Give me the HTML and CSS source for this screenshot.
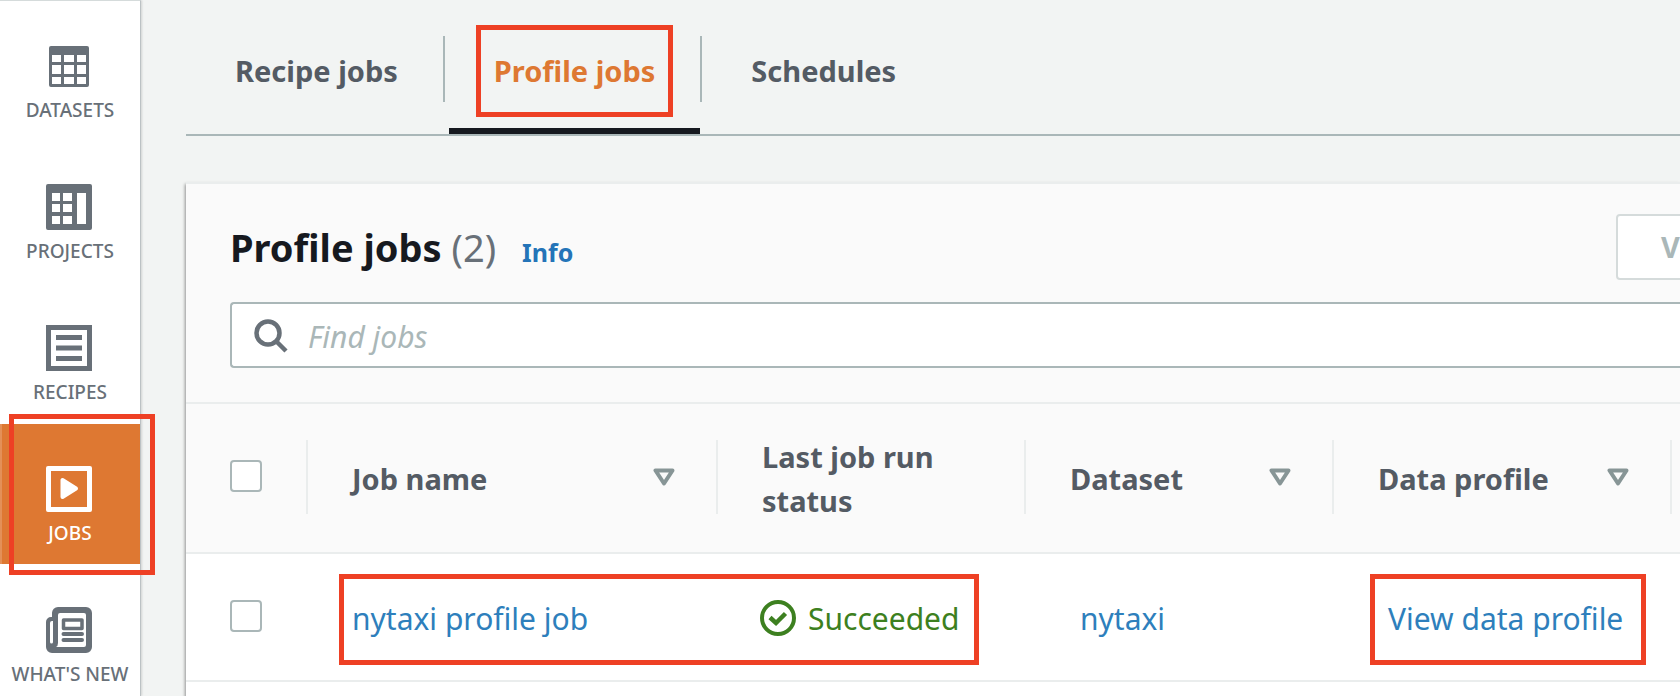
FILE: index.html
```html
<!DOCTYPE html>
<html lang="en">
<head>
<meta charset="utf-8">
<title>Profile jobs</title>
<link rel="stylesheet" href="styles.css">
</head>
<body>
<div class="app">
  <nav class="sidebar" aria-label="Main">
    <a class="nav-item" href="#datasets">
      <svg class="nav-icon" viewBox="0 0 46 46" aria-hidden="true"><path fill="currentColor" fill-rule="evenodd" d="M5 3h36a2 2 0 0 1 2 2v37a2 2 0 0 1-2 2H5a2 2 0 0 1-2-2V5a2 2 0 0 1 2-2zM6 12v7h9v-7zm12 0v7h10v-7zm13 0v7h9v-7zM6 22v9h9v-9zm12 0v9h10v-9zm13 0v9h9v-9zM6 34v7h9v-7zm12 0v7h10v-7zm13 0v7h9v-7z"/></svg>
      <span>DATASETS</span>
    </a>
    <a class="nav-item" href="#projects">
      <svg class="nav-icon" viewBox="0 0 46 46" aria-hidden="true"><path fill="currentColor" fill-rule="evenodd" d="M2 0h42a2 2 0 0 1 2 2v42a2 2 0 0 1-2 2H2a2 2 0 0 1-2-2V2a2 2 0 0 1 2-2zM6 9v8h8V9zm11 0v8h9V9zM6 20v8h8v-8zm11 0v8h9v-8zM6 32v8h8v-8zm11 0v8h9v-8zM31 9v31h9V9z"/></svg>
      <span>PROJECTS</span>
    </a>
    <a class="nav-item" href="#recipes">
      <svg class="nav-icon" viewBox="0 0 46 46" aria-hidden="true"><path fill="currentColor" fill-rule="evenodd" d="M0 0h46v46H0zM5 5v36h36V5zM10 10h26v5H10zm0 10.500h26v5H10zM10 31h26v5H10z"/></svg>
      <span>RECIPES</span>
    </a>
    <a class="nav-item nav-item-active" href="#jobs" aria-current="page">
      <svg class="nav-icon" viewBox="0 0 46 46" aria-hidden="true"><path fill="currentColor" fill-rule="evenodd" d="M2 0h42a2 2 0 0 1 2 2v42a2 2 0 0 1-2 2H2a2 2 0 0 1-2-2V2a2 2 0 0 1 2-2zM5 5v36h36V5z"/><path fill="currentColor" stroke="currentColor" stroke-width="4" stroke-linejoin="round" d="M16.500 14v17L30 22.500z"/></svg>
      <span>JOBS</span>
      <i class="mark mark-nav"></i>
    </a>
    <a class="nav-item" href="#new">
      <svg class="nav-icon" viewBox="0 0 46 46" aria-hidden="true"><path fill="currentColor" fill-rule="evenodd" d="M12 0h28a6 6 0 0 1 6 6v34a6 6 0 0 1-6 6H6a6 6 0 0 1-6-6V15a5 5 0 0 1 5-5h1V6a6 6 0 0 1 6-6zM12 8v28q0 3-2 4h28a2 2 0 0 0 2-2V8a2 2 0 0 0-2-2H14a2 2 0 0 0-2 2zM6 14q-2 0-2 2v19a1.500 1.500 0 0 0 3 0V14z"/><path fill="none" stroke="currentColor" stroke-width="3.500" stroke-linejoin="round" d="M17.500 13h18.500v8.500h-18.500z"/><path fill="none" stroke="currentColor" stroke-width="4" stroke-linecap="round" d="M17.500 27h18.500M17.500 33h18.500"/></svg>
      <span>WHAT'S NEW</span>
    </a>
  </nav>

  <main class="content">
    <div class="tabs" role="tablist">
      <button class="tab" role="tab" type="button">Recipe jobs</button>
      <button class="tab tab-active" role="tab" type="button" aria-selected="true">Profile jobs<i class="mark mark-tab"></i></button>
      <button class="tab" role="tab" type="button">Schedules</button>
    </div>

    <section class="panel">
      <header class="panel-head">
        <div class="title-row">
          <div class="title-group">
            <h1 class="title">Profile jobs <span class="count">(2)</span></h1>
            <a class="info" href="#info">Info</a>
          </div>
          <div class="actions"><button class="button" type="button" disabled>View details</button></div>
        </div>
        <label class="search">
          <svg class="search-icon" viewBox="0 0 34 34" aria-hidden="true" fill="none" stroke="currentColor" stroke-width="4.500"><circle cx="14" cy="14" r="11.500"/><path d="M22 22l10 10"/></svg>
          <input class="search-input" type="text" placeholder="Find jobs" aria-label="Find jobs">
        </label>
      </header>

      <table class="jobs">
        <colgroup><col class="col-check"><col class="col-name"><col class="col-status"><col class="col-dataset"><col class="col-profile"><col></colgroup>
        <thead>
          <tr>
            <th><div class="head-cell head-check"><input class="check" type="checkbox" aria-label="Select all jobs"></div></th>
            <th><div class="head-cell">Job name<svg class="sort" viewBox="0 0 22 18" aria-hidden="true"><path d="M2.500 2.500h17L11 15.500z"/></svg></div></th>
            <th><div class="head-cell">Last job run status</div></th>
            <th><div class="head-cell">Dataset<svg class="sort" viewBox="0 0 22 18" aria-hidden="true"><path d="M2.500 2.500h17L11 15.500z"/></svg></div></th>
            <th><div class="head-cell">Data profile<svg class="sort" viewBox="0 0 22 18" aria-hidden="true"><path d="M2.500 2.500h17L11 15.500z"/></svg></div></th>
            <th></th>
          </tr>
        </thead>
        <tbody>
          <tr>
            <td><div class="cell cell-check"><input class="check" type="checkbox" aria-label="Select nytaxi profile job"></div></td>
            <td><div class="cell cell-name"><a class="link" href="#job">nytaxi profile job</a><i class="mark mark-job"></i></div></td>
            <td><div class="cell cell-status"><svg class="status-icon" viewBox="0 0 36 36" aria-hidden="true" fill="none" stroke="currentColor"><circle cx="18" cy="18" r="16" stroke-width="4"/><path stroke-width="4.500" d="M10 17.500l6 5.500 9.500-9.500"/></svg>Succeeded</div></td>
            <td><div class="cell cell-link"><a class="link" href="#dataset">nytaxi</a></div></td>
            <td><div class="cell cell-link"><a class="link" href="#profile">View data profile</a><i class="mark mark-profile"></i></div></td>
            <td></td>
          </tr>
        </tbody>
      </table>
    </section>
  </main>
</div>
</body>
</html>
```
FILE: styles.css
```css
* { box-sizing: border-box; }

body {
  margin: 0;
  background: #f2f4f3;
  color: #545b64;
  font-family: "Noto Sans", "Open Sans", sans-serif;
  font-size: 30px;
  line-height: 44px;
}

button, input { font: inherit; }
a { text-decoration: none; }

.app {
  display: flex;
  height: 100vh;
  overflow: hidden;
}

/* Side navigation */
.sidebar {
  flex: none;
  display: flex;
  flex-direction: column;
  gap: 1px;
  width: 141px;
  background: #fff;
  border-top: 1px solid #d5dbdb;
  border-right: 1px solid #bcc2c4;
  box-shadow: 1px 0 2px #0002;
  position: relative;
  z-index: 1;
}

.nav-item {
  position: relative;
  flex: none;
  display: flex;
  flex-direction: column;
  align-items: center;
  gap: 8px;
  height: 140px;
  padding-top: 42px;
  color: #687078;
  font-size: 19px;
  font-weight: 500;
  line-height: 26px;
  white-space: nowrap;
}

.nav-item-active {
  background: #de7832;
  color: #fff;
  box-shadow: inset 2px 0 #e49058;
}

.nav-icon {
  width: 46px;
  height: 46px;
  margin-right: 2px;
}

/* Highlight frames drawn over the page */
.mark {
  position: absolute;
  z-index: 2;
  border: 5px solid #ee4024;
  pointer-events: none;
}

.mark-nav { inset: -10px -15px -11px 9px; }
.mark-tab { inset: 25px 27px 11px 27px; }
.mark-job { top: 20px; left: 31px; width: 640px; height: 91px; }
.mark-profile { top: 20px; left: 36px; width: 276px; height: 91px; }

/* Tabs */
.content {
  flex: 1;
  min-width: 0;
  padding-left: 45px;
}

.tabs {
  display: flex;
  gap: 6px;
  border-bottom: 2px solid #aab7b8;
}

.tab {
  position: relative;
  padding: 49px 45px 35px;
  border: 0;
  border-bottom: 6px solid transparent;
  background: none;
  color: #545b64;
  font-size: 29px;
  font-weight: 700;
  white-space: nowrap;
}

.tab:first-child { padding-left: 49px; }

.tab:not(:last-child)::after {
  content: "";
  position: absolute;
  top: 36px;
  right: -2px;
  width: 2px;
  height: 66px;
  background: #aab7b8;
}

.tab-active {
  color: #de7832;
  border-bottom-color: #16191f;
}

/* Panel */
.panel {
  margin-top: 46px;
  background: #fff;
  border-top: 2px solid #eaeded;
  box-shadow: -1px 2px 3px #0006;
  min-height: 100vh;
}

.panel-head {
  padding: 30px 0 34px 44px;
  background: #fafafa;
}

.title-row {
  display: flex;
  justify-content: space-between;
  margin-bottom: 22px;
}

.title-group {
  display: flex;
  align-items: baseline;
  gap: 26px;
  padding-top: 11px;
}

.title {
  margin: 0;
  color: #16191f;
  font-size: 38px;
  font-weight: 700;
}

.count {
  color: #687078;
  font-weight: 400;
}

.info {
  color: #2474b8;
  font-size: 25px;
  font-weight: 700;
}

.actions {
  flex: none;
  width: 64px;
}

.button {
  height: 66px;
  padding: 0 43px;
  background: #fff;
  border: 2px solid #d5dbdb;
  border-radius: 4px;
  color: #aab7b8;
  font-size: 29px;
  font-weight: 700;
  white-space: nowrap;
}

.search {
  display: flex;
  align-items: center;
  gap: 20px;
  height: 66px;
  padding-left: 22px;
  background: #fff;
  border: 2px solid #aab7b8;
  border-right: 0;
  border-radius: 4px 0 0 4px;
}

.search-icon {
  flex: none;
  width: 34px;
  height: 34px;
  margin-top: 2px;
  color: #687078;
}

.search-input {
  flex: 1;
  min-width: 0;
  padding: 3px 0 0;
  border: 0;
  outline: 0;
  background: none;
}

.search-input::placeholder {
  color: #aab7b8;
  font-style: italic;
  opacity: 1;
}

/* Jobs table */
.jobs {
  width: 100%;
  table-layout: fixed;
  border-collapse: separate;
  border-spacing: 0;
}

.col-check { width: 122px; }
.col-name { width: 410px; }
.col-status, .col-dataset { width: 308px; }
.col-profile { width: 338px; }

.jobs th, .jobs td {
  padding: 0;
  border-bottom: 2px solid #eaeded;
}

.jobs th {
  height: 152px;
  padding-bottom: 2px;
  background: #fafafa;
  border-top: 2px solid #eaeded;
  color: #545b64;
  font-size: 29px;
  text-align: left;
}

.head-cell {
  display: flex;
  align-items: center;
  justify-content: space-between;
  height: 74px;
  padding: 4px 41px 0 44px;
  border-right: 2px solid #eaeded;
}

.head-check { padding: 0 0 2px 44px; }

.sort {
  width: 22px;
  height: 18px;
  margin-bottom: 4px;
  fill: none;
  stroke: #879596;
  stroke-width: 4;
  stroke-linejoin: round;
}

.check {
  appearance: none;
  width: 32px;
  height: 32px;
  margin: 0;
  background: #fff;
  border: 2px solid #aab7b8;
  border-radius: 4px;
}

.cell {
  position: relative;
  display: flex;
  align-items: center;
  height: 126px;
  padding: 4px 0 0 44px;
  white-space: nowrap;
}

.cell-check { padding: 0 0 2px 44px; }
.cell-link { padding-left: 54px; }

.cell-status {
  gap: 12px;
  padding-left: 42px;
  color: #3d8020;
}

.status-icon {
  width: 36px;
  height: 36px;
  margin-bottom: 2px;
}

.link { color: #2e7fbc; }
```
